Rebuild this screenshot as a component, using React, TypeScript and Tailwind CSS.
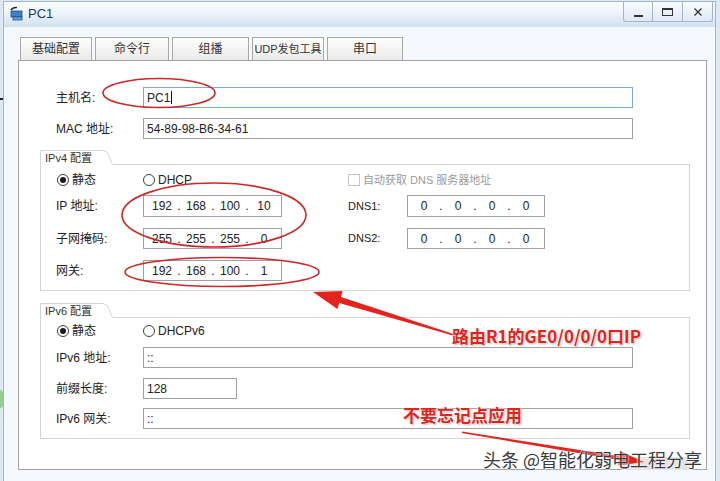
import React from "react";

const uiFont = "font-['Liberation_Sans','Noto_Sans_CJK_SC',sans-serif]";

function Radio({ checked, label }: { checked?: boolean; label: string }) {
  return (
    <div className="flex items-center gap-[3px]">
      <span className="w-[12px] h-[12px] rounded-full border border-[#3a3a3a] bg-white flex items-center justify-center">
        {checked && <span className="w-[6px] h-[6px] rounded-full bg-[#1a1a1a]" />}
      </span>
      <span className="text-[12px] text-[#222]">{label}</span>
    </div>
  );
}

function IpBox({ parts, className }: { parts: string[]; className: string }) {
  return (
    <div className={`h-full border border-[#a0a0a0] bg-white flex items-center text-[12px] text-[#222] ${className}`}>
      {parts.map((p, i) => (
        <React.Fragment key={i}>
          {i > 0 && <span className="w-[6px] text-center">.</span>}
          <span className="w-[28px] text-center">{p}</span>
        </React.Fragment>
      ))}
    </div>
  );
}

function TextBox({ value, className }: { value: string; className: string }) {
  return (
    <div className={`h-full border bg-white flex items-center pl-[3px] text-[12px] text-[#222] ${className}`}>
      {value}
    </div>
  );
}

function Group({ title, children }: { title: string; children: React.ReactNode }) {
  return (
    <div className="flex flex-col w-[650px]">
      <div className="flex items-end h-[15px]">
        <div className="h-full w-[63px] border-l border-t border-[#d4d4d4] rounded-tl-[2px] pl-[4px] text-[11px] leading-[15px] text-[#333]">
          {title}
        </div>
        <svg width="10" height="15" className="shrink-0">
          <path d="M0 0.5 Q4 0.5 6 6 L9.5 14.5" fill="none" stroke="#d4d4d4" />
        </svg>
        <div className="flex-1 h-px bg-[#d4d4d4]" />
      </div>
      <div className="flex flex-col border-l border-r border-b border-[#d4d4d4] pl-[15px] pb-[9px]">
        {children}
      </div>
    </div>
  );
}

const tabs = [
  { name: "基础配置", w: "w-[72px]" },
  { name: "命令行", w: "w-[74px]" },
  { name: "组播", w: "w-[77px]" },
  { name: "UDP发包工具", w: "w-[72px]" },
  { name: "串口", w: "w-[76px]" },
];

export default function App() {
  return (
    <div className={`relative w-[720px] h-[481px] overflow-hidden bg-[#dde8f4] ${uiFont}`}>
      {/* desktop bits peeking out at the left */}
      <div className="absolute left-0 top-[98px] w-[3px] h-[2px] bg-[#222]" />
      <div className="absolute left-0 top-[390px] w-[3px] h-[18px] rounded-r bg-[#93cf8f]" />

      {/* window */}
      <div className="ml-[3px] mt-[1px] w-[713px] h-[495px] border border-[#a3b6cc] bg-[#f5f9fd] flex flex-col">
        {/* title bar */}
        <div className="h-[25px] flex items-start bg-gradient-to-b from-[#fbfdfe] via-[#ebf2f9] to-[#cfe0f1]">
          <div className="flex items-center h-[22px] pl-[6px] gap-[4px]">
            <svg width="14" height="15" viewBox="0 0 14 15">
              <path d="M1 4 Q3 1 7 1.5" fill="none" stroke="#222" strokeWidth="1.6" />
              <rect x="1" y="5" width="11" height="6" fill="#3f7fc7" stroke="#1f4f8a" strokeWidth="0.8" />
              <rect x="3" y="11" width="9" height="3" fill="#6fa3dc" stroke="#1f4f8a" strokeWidth="0.8" />
            </svg>
            <span className="text-[13px] text-[#1d3a62] mt-[1px]">PC1</span>
          </div>
          <div className="ml-auto mr-[2px] flex h-[20px]">
            <div className="w-[30px] h-full border border-t-0 border-[#a5b5c8] rounded-bl-[3px] bg-gradient-to-b from-[#f8fbfe] to-[#dfe9f4] flex items-end justify-center pb-[4px]">
              <span className="w-[9px] h-[2px] bg-[#333]" />
            </div>
            <div className="w-[30px] h-full border border-t-0 border-l-0 border-[#a5b5c8] bg-gradient-to-b from-[#f8fbfe] to-[#dfe9f4] flex items-center justify-center">
              <span className="w-[11px] h-[8px] border border-t-[2px] border-[#333]" />
            </div>
            <div className="w-[30px] h-full border border-t-0 border-l-0 border-[#a5b5c8] rounded-br-[3px] bg-gradient-to-b from-[#f8fbfe] to-[#dfe9f4] flex items-center justify-center">
              <svg width="8" height="8" viewBox="0 0 8 8">
                <path d="M0.5 0.5 L7.5 7.5 M7.5 0.5 L0.5 7.5" stroke="#333" strokeWidth="1.3" />
              </svg>
            </div>
          </div>
        </div>

        {/* body */}
        <div className="flex flex-col pl-[14px] pr-[8px] pt-[10px]">
          <div className="flex gap-[3px] pl-[2px] h-[23px]">
            {tabs.map((t) => (
              <div
                key={t.name}
                className={`${t.w} h-full border border-b-0 border-[#a8a8a8] bg-gradient-to-b from-[#fdfdfd] to-[#ebebeb] flex items-center justify-center whitespace-nowrap text-[12px] text-[#333]`}
              >
                {t.name === "UDP发包工具" ? <span className="text-[11px]">{t.name}</span> : t.name}
              </div>
            ))}
          </div>

          <div className="h-[410px] border border-[#a3a3a3] bg-white flex flex-col pl-[21px]">
            <div className="flex items-center h-[21px] mt-[26px] pl-[16px]">
              <span className="w-[87px] text-[12px] text-[#222]">主机名:</span>
              <div className="w-[490px] h-full border border-[#74aad8] bg-white flex items-center pl-[3px] text-[12px] text-[#222]">
                PC1
                <span className="w-px h-[13px] bg-[#111] ml-[1px]" />
              </div>
            </div>
            <div className="flex items-center h-[21px] mt-[10px] pl-[16px]">
              <span className="w-[87px] text-[12px] text-[#222]">MAC 地址:</span>
              <TextBox value="54-89-98-B6-34-61" className="w-[490px] border-[#a0a0a0]" />
            </div>

            <div className="mt-[11px]">
              <Group title="IPv4 配置">
                <div className="flex items-center h-[14px] mt-[8px]">
                  <div className="w-[87px] pl-[1px]">
                    <Radio checked label="静态" />
                  </div>
                  <div className="w-[205px]">
                    <Radio label="DHCP" />
                  </div>
                  <div className="flex items-center gap-[3px]">
                    <span className="w-[12px] h-[12px] border border-[#c4c4c4] bg-white" />
                    <span className="text-[11px] text-[#9a9a9a]">自动获取 DNS 服务器地址</span>
                  </div>
                </div>
                <div className="flex items-center h-[22px] mt-[8px]">
                  <span className="w-[87px] text-[12px] text-[#222]">IP 地址:</span>
                  <IpBox parts={["192", "168", "100", "10"]} className="w-[139px] pl-[4px]" />
                  <span className="w-[66px]" />
                  <span className="w-[59px] text-[11px] text-[#222]">DNS1:</span>
                  <IpBox parts={["0", "0", "0", "0"]} className="w-[138px] pl-[2px]" />
                </div>
                <div className="flex items-center h-[21px] mt-[11px]">
                  <span className="w-[87px] text-[12px] text-[#222]">子网掩码:</span>
                  <IpBox parts={["255", "255", "255", "0"]} className="w-[139px] pl-[4px]" />
                  <span className="w-[66px]" />
                  <span className="w-[59px] text-[11px] text-[#222]">DNS2:</span>
                  <IpBox parts={["0", "0", "0", "0"]} className="w-[138px] pl-[2px]" />
                </div>
                <div className="flex items-center h-[21px] mt-[11px]">
                  <span className="w-[87px] text-[12px] text-[#222]">网关:</span>
                  <IpBox parts={["192", "168", "100", "1"]} className="w-[139px] pl-[4px]" />
                </div>
              </Group>
            </div>

            <div className="mt-[12px]">
              <Group title="IPv6 配置">
                <div className="flex items-center h-[14px] mt-[6px]">
                  <div className="w-[87px] pl-[1px]">
                    <Radio checked label="静态" />
                  </div>
                  <Radio label="DHCPv6" />
                </div>
                <div className="flex items-center h-[21px] mt-[9px]">
                  <span className="w-[87px] text-[12px] text-[#222]">IPv6 地址:</span>
                  <TextBox value="::" className="w-[490px] border-[#a0a0a0]" />
                </div>
                <div className="flex items-center h-[21px] mt-[10px]">
                  <span className="w-[87px] text-[12px] text-[#222]">前缀长度:</span>
                  <TextBox value="128" className="w-[94px] border-[#a0a0a0]" />
                </div>
                <div className="flex items-center h-[21px] mt-[9px]">
                  <span className="w-[87px] text-[12px] text-[#222]">IPv6 网关:</span>
                  <TextBox value="::" className="w-[490px] border-[#a0a0a0]" />
                </div>
              </Group>
            </div>
          </div>
        </div>
      </div>

      {/* annotations drawn over the screenshot */}
      <div className="absolute left-[622px] top-[457px] w-[70px] h-[13px] bg-[#e4e4e4]" />
      <svg className="absolute left-0 top-0 pointer-events-none" width="720" height="481">
        <ellipse cx="159" cy="93" rx="56" ry="14.5" fill="none" stroke="#cf2626" strokeWidth="1.6" />
        <ellipse cx="214" cy="215" rx="92" ry="32" fill="none" stroke="#cf2626" strokeWidth="1.6" />
        <ellipse cx="222" cy="272" rx="97" ry="14.5" fill="none" stroke="#cf2626" strokeWidth="1.6" />
        <polygon
          points="313,292 342.6,291 341,297 455,334.5 454.6,336 339.2,303 337.4,309"
          fill="#e3231c"
        />
        <polygon
          points="644,462 620.4,451.2 619.6,456.3 462,431.5 461.8,433 619,460 618.2,465.5"
          fill="#e3231c"
        />
      </svg>
      <div className="absolute left-[452px] top-[326px] text-[17px] leading-[20px] font-bold text-[#e2231a] [text-shadow:0_0_2px_#fff,0_0_2px_#fff,1px_1px_2px_#999] font-['Noto_Sans_CJK_SC',sans-serif] whitespace-nowrap">
        路由R1的GE0/0/0/0口IP
      </div>
      <div className="absolute left-[403px] top-[405px] text-[17px] leading-[20px] font-bold text-[#e2231a] [text-shadow:0_0_2px_#fff,0_0_2px_#fff,1px_1px_2px_#999] font-['Noto_Sans_CJK_SC',sans-serif] whitespace-nowrap">
        不要忘记点应用
      </div>
      <div className="absolute left-[483px] top-[448px] text-[18px] leading-[22px] text-[#3a3a3a] [text-shadow:0_0_2px_#fff,0_0_2px_#fff] font-['Noto_Sans_CJK_SC',sans-serif] whitespace-nowrap">
        头条 @智能化弱电工程分享
      </div>
    </div>
  );
}
